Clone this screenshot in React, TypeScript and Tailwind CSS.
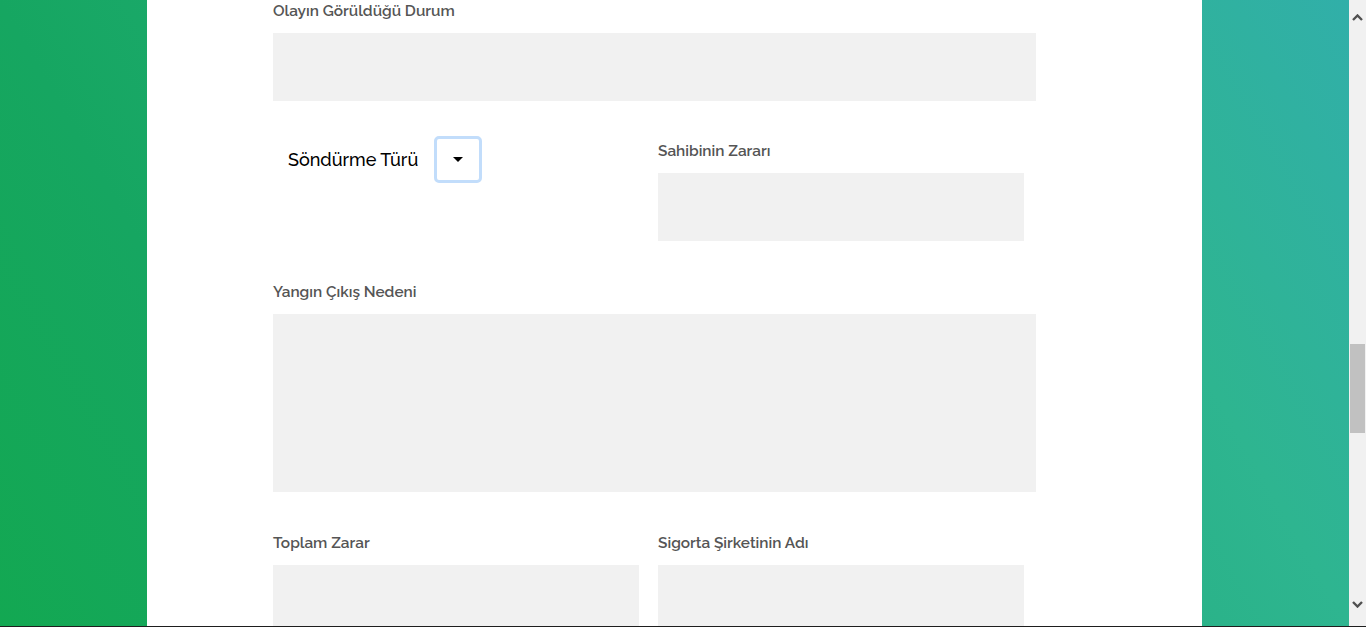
import React from "react";

const Label = ({ children }: { children: React.ReactNode }) => (
  <div className="text-[15.4px] leading-[22px] font-semibold text-[#555555]">{children}</div>
);

export default function App() {
  return (
    <div
      className="w-[1366px] h-[627px] overflow-hidden flex flex-col"
      style={{ fontFamily: "Raleway, Lato, 'Open Sans', sans-serif" }}
    >
      <div className="flex flex-1 min-h-0">
        <div className="w-[1349px] h-full flex bg-[linear-gradient(60deg,#13a852_0%,#16a661_21%,#2eb590_79%,#31afa9_100%)]">
          <div className="w-[147px]" />
          <div className="w-[1055px] bg-white pl-[126px]">
            <Label>Olayın Görüldüğü Durum</Label>
            <div className="mt-[11px] w-[763px] h-[68px] bg-[#f1f1f1]" />

            <div className="mt-[36px] flex gap-[19px]">
              <div className="w-[366px] flex items-start pl-[15px]">
                <div className="mt-[10px] text-[18px] leading-[26px] font-medium text-black">Söndürme Türü</div>
                <div className="ml-[16px] -mt-px w-[48px] h-[47px] rounded-[5px] border-[3px] border-[#c2ddfb] flex items-center justify-center">
                  <div className="w-0 h-0 border-l-[5px] border-r-[5px] border-t-[5px] border-l-transparent border-r-transparent border-t-black" />
                </div>
              </div>
              <div className="w-[366px] mt-[3px]">
                <Label>Sahibinin Zararı</Label>
                <div className="mt-[11px] w-[366px] h-[68px] bg-[#f1f1f1]" />
              </div>
            </div>

            <div className="mt-[40px]">
              <Label>Yangın Çıkış Nedeni</Label>
              <div className="mt-[11px] w-[763px] h-[178px] bg-[#f1f1f1]" />
            </div>

            <div className="mt-[40px] flex gap-[19px]">
              <div className="w-[366px]">
                <Label>Toplam Zarar</Label>
                <div className="mt-[11px] w-[366px] h-[68px] bg-[#f1f1f1]" />
              </div>
              <div className="w-[366px]">
                <Label>Sigorta Şirketinin Adı</Label>
                <div className="mt-[11px] w-[366px] h-[68px] bg-[#f1f1f1]" />
              </div>
            </div>
          </div>
          <div className="flex-1" />
        </div>
        <div className="w-[17px] h-full bg-[#f1f1f1] flex flex-col">
          <div className="h-[34px] w-full flex items-center justify-center">
            <svg width="11" height="7" viewBox="0 0 11 7">
              <path d="M1 6 L5.5 1.5 L10 6" stroke="#505050" strokeWidth="2.4" fill="none" />
            </svg>
          </div>
          <div className="h-[310px]" />
          <div className="ml-[1px] w-[15px] h-[89px] bg-[#c1c1c1]" />
          <div className="flex-1" />
          <div className="h-[44px] w-full flex items-center justify-center">
            <svg width="11" height="7" viewBox="0 0 11 7">
              <path d="M1 1 L5.5 5.5 L10 1" stroke="#505050" strokeWidth="2.4" fill="none" />
            </svg>
          </div>
        </div>
      </div>
      <div className="h-[1px] bg-[#1e1e1e]" />
    </div>
  );
}
